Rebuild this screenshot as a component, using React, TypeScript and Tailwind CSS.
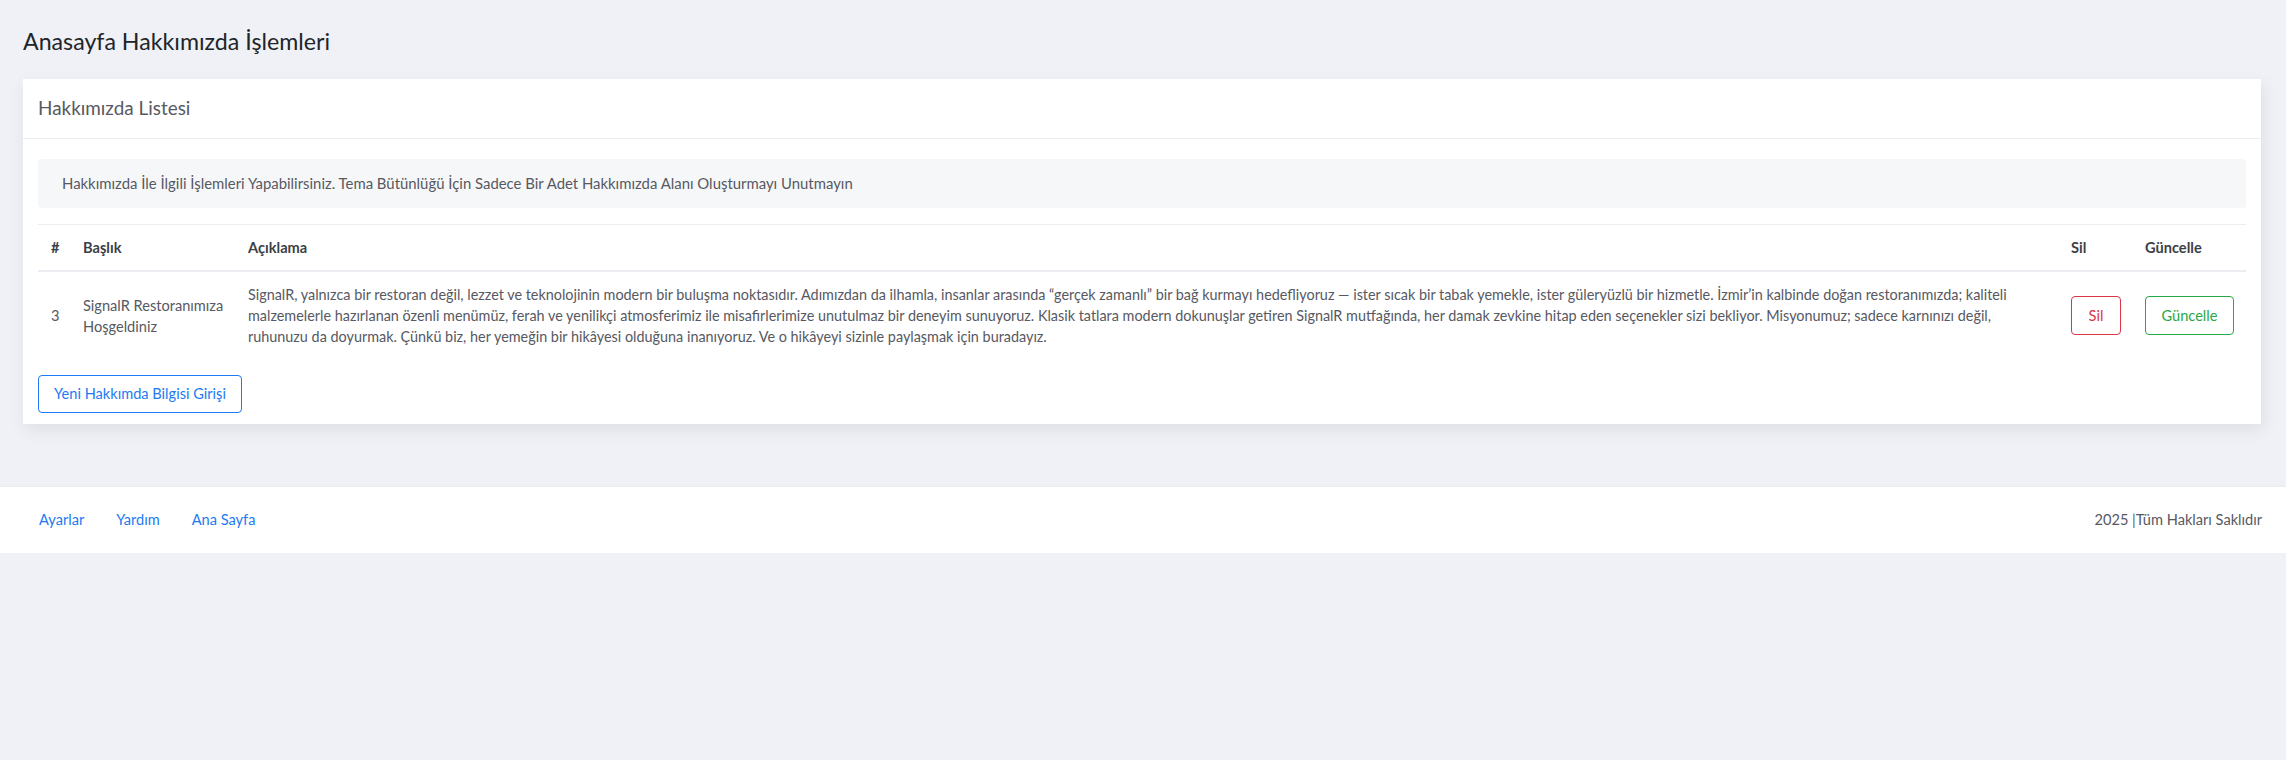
import React from "react";

const FONT = { fontFamily: "Lato, 'Noto Sans', sans-serif" };

export default function App() {
  return (
    <div className="min-h-screen bg-[#f0f1f6] text-[14.6px] text-[#575962]" style={FONT}>
      <div className="pl-[23px] pr-[25px] pt-[27px]">
        <h3 className="text-[23.2px] leading-[29px] font-normal text-[#212529]">Anasayfa Hakkımızda İşlemleri</h3>
        <div className="mt-[23px] bg-white shadow-[2px_6px_15px_0_rgba(69,65,78,0.1)]">
          <div className="h-[60px] flex items-center px-[15px] border-b border-[#ebecec]">
            <span className="text-[18.9px] text-[#575962]">Hakkımızda Listesi</span>
          </div>
          <div className="pt-[20px] px-[15px] pb-[11px]">
            <div className="h-[49px] flex items-center pl-[24px] rounded-[4px] bg-[#f6f7f9] text-[14.9px] text-[#575962]">
              Hakkımızda İle İlgili İşlemleri Yapabilirsiniz. Tema Bütünlüğü İçin Sadece Bir Adet Hakkımızda Alanı Oluşturmayı Unutmayın
            </div>
            <table className="mt-[16px] mb-[16px] w-full table-fixed border-collapse text-[14.6px] leading-[21px]">
              <colgroup>
                <col className="w-[33px]" />
                <col className="w-[165px]" />
                <col />
                <col className="w-[74px]" />
                <col className="w-[113px]" />
              </colgroup>
              <thead>
                <tr className="text-left text-[#3d3f46] font-bold">
                  <th className="pl-[13px] pr-[12px] py-[12px] border-t border-b-2 border-[#ebedf2] font-bold">#</th>
                  <th className="px-[12px] py-[12px] border-t border-b-2 border-[#ebedf2] font-bold">Başlık</th>
                  <th className="px-[12px] py-[12px] border-t border-b-2 border-[#ebedf2] font-bold">Açıklama</th>
                  <th className="px-[12px] py-[12px] border-t border-b-2 border-[#ebedf2] font-bold">Sil</th>
                  <th className="px-[12px] py-[12px] border-t border-b-2 border-[#ebedf2] font-bold">Güncelle</th>
                </tr>
              </thead>
              <tbody>
                <tr className="align-middle">
                  <td className="pl-[13px] pr-[12px] py-[12px]">3</td>
                  <td className="px-[12px] py-[12px] whitespace-nowrap">
                    SignalR Restoranımıza
                    <br />
                    Hoşgeldiniz
                  </td>
                  <td className="px-[12px] py-[12px] whitespace-nowrap text-[14.4px]">
                    SignalR, yalnızca bir restoran değil, lezzet ve teknolojinin modern bir buluşma noktasıdır. Adımızdan da ilhamla, insanlar arasında “gerçek zamanlı” bir bağ kurmayı hedefliyoruz — ister sıcak bir tabak yemekle, ister güleryüzlü bir hizmetle. İzmir’in kalbinde doğan restoranımızda; kaliteli
                    <br />
                    malzemelerle hazırlanan özenli menümüz, ferah ve yenilikçi atmosferimiz ile misafirlerimize unutulmaz bir deneyim sunuyoruz. Klasik tatlara modern dokunuşlar getiren SignalR mutfağında, her damak zevkine hitap eden seçenekler sizi bekliyor. Misyonumuz; sadece karnınızı değil,
                    <br />
                    ruhunuzu da doyurmak. Çünkü biz, her yemeğin bir hikâyesi olduğuna inanıyoruz. Ve o hikâyeyi sizinle paylaşmak için buradayız.
                  </td>
                  <td className="px-[12px] py-[12px]">
                    <button className="h-[39px] w-[50px] border border-[#dc3545] rounded-[4px] text-[#dc3545] leading-[21px]">Sil</button>
                  </td>
                  <td className="px-[12px] py-[12px]">
                    <button className="h-[39px] w-[89px] border border-[#28a745] rounded-[4px] text-[#28a745] leading-[21px]">Güncelle</button>
                  </td>
                </tr>
              </tbody>
            </table>
            <button className="h-[38px] w-[204px] border border-[#1d7af3] rounded-[4px] text-[#1d7af3]">Yeni Hakkımda Bilgisi Girişi</button>
          </div>
        </div>
      </div>
      <footer className="mt-[62px] h-[67px] bg-white border-t border-[#ebecec] flex items-center justify-between pl-[23px] pr-[24px]">
        <nav className="flex">
          <a className="px-[16px] text-[#1d7af3]">Ayarlar</a>
          <a className="px-[16px] text-[#1d7af3]">Yardım</a>
          <a className="px-[16px] text-[#1d7af3]">Ana Sayfa</a>
        </nav>
        <div className="text-[#575962]">2025 |Tüm Hakları Saklıdır</div>
      </footer>
    </div>
  );
}
